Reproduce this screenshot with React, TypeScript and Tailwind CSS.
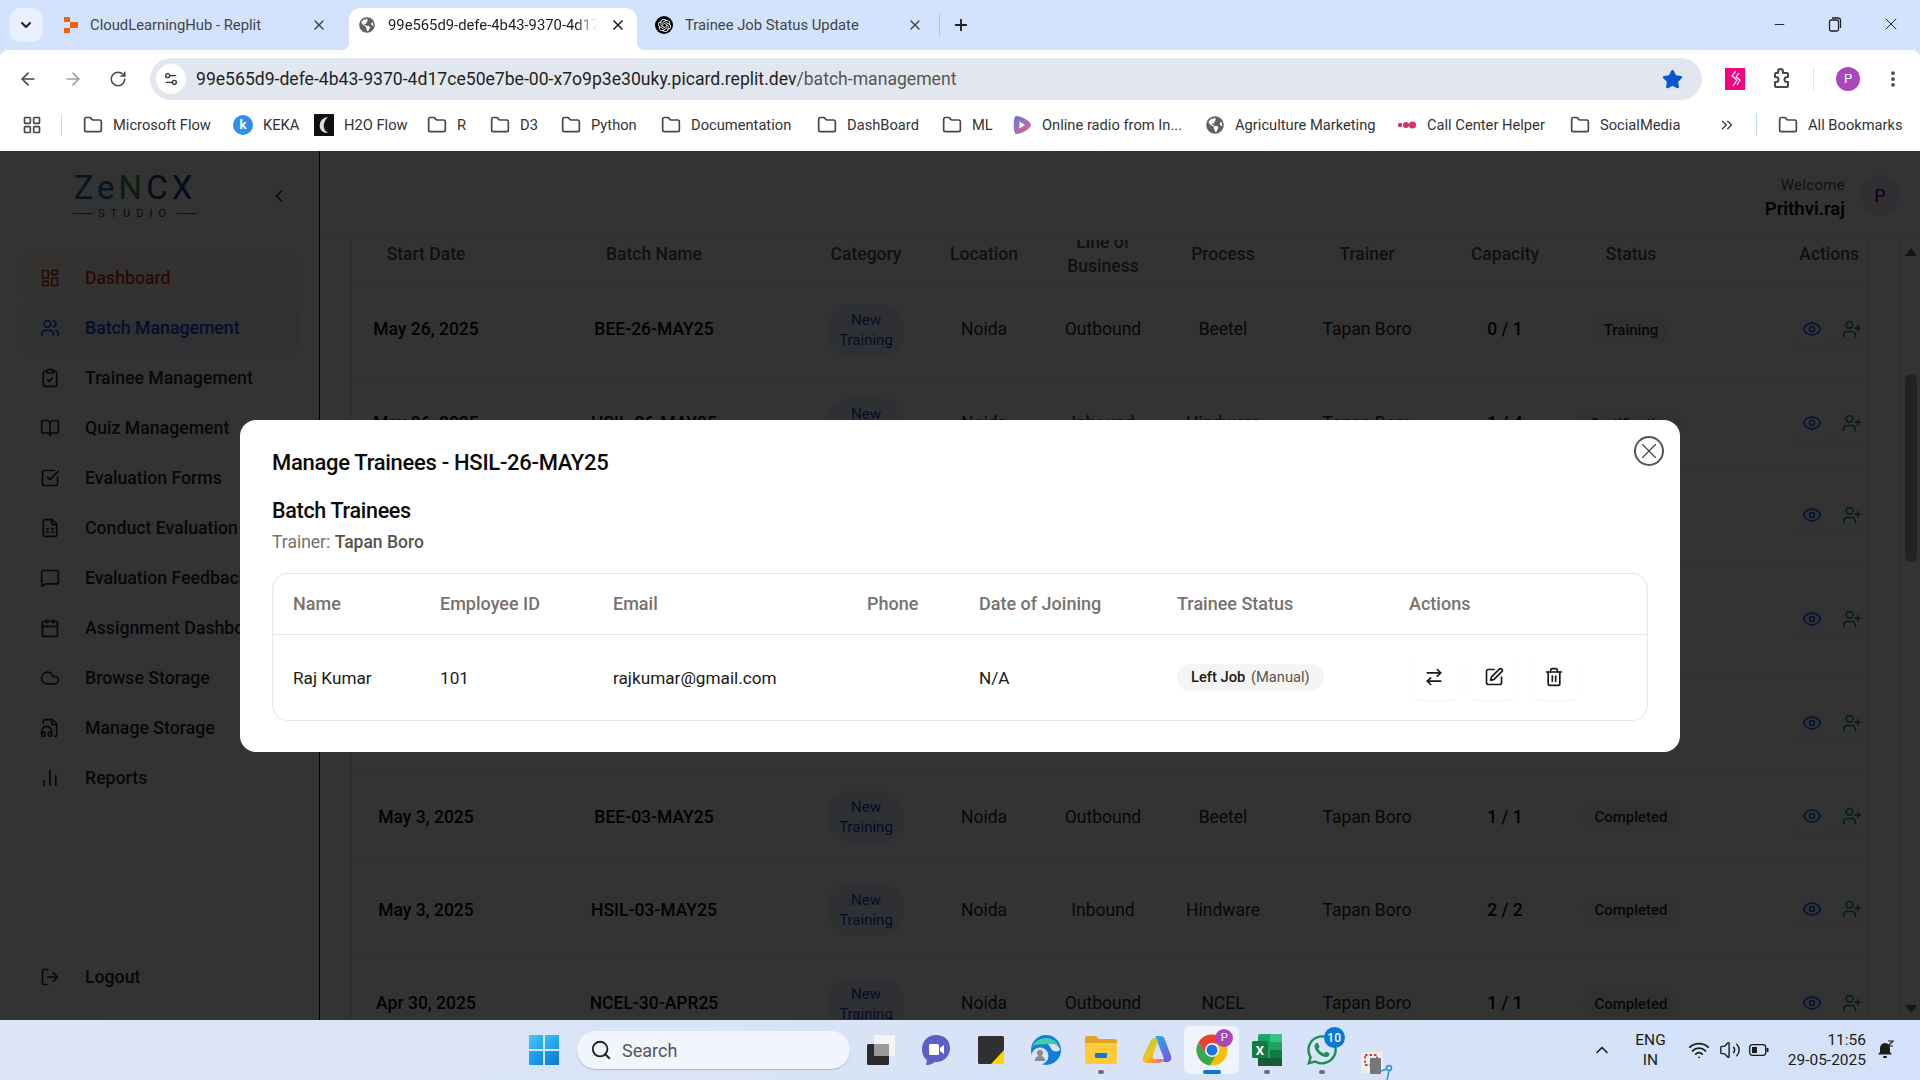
import {
  ArrowLeft,
  ArrowRight,
  ArrowRightLeft,
  BookOpen,
  Calendar,
  ChartNoAxesColumn,
  ChevronLeft,
  ChevronUp,
  ChevronsRight,
  ClipboardCheck,
  Cloud,
  EllipsisVertical,
  Eye,
  FileAudio2,
  FileSpreadsheet,
  Folder,
  LayoutDashboard,
  LayoutGrid,
  LogOut,
  MessageSquare,
  Minus,
  Plus,
  RotateCw,
  Search,
  Settings2,
  SquareCheckBig,
  SquarePen,
  Star,
  Trash2,
  UserPlus,
  Users,
  Volume2,
  Wifi,
  X,
} from 'lucide-react'
import { FaGlobeAmericas, FaWhatsapp } from 'react-icons/fa'
import { SiOpenai } from 'react-icons/si'

const navItems = [
  { label: 'Dashboard', icon: LayoutDashboard, box: 'bg-orange-50/60', text: 'text-orange-700' },
  { label: 'Batch Management', icon: Users, box: 'bg-blue-100/60', text: 'text-blue-700' },
  { label: 'Trainee Management', icon: ClipboardCheck, box: '', text: 'text-gray-800' },
  { label: 'Quiz Management', icon: BookOpen, box: '', text: 'text-gray-800' },
  { label: 'Evaluation Forms', icon: SquareCheckBig, box: '', text: 'text-gray-800' },
  { label: 'Conduct Evaluation', icon: FileSpreadsheet, box: '', text: 'text-gray-800' },
  { label: 'Evaluation Feedback', icon: MessageSquare, box: '', text: 'text-gray-800' },
  { label: 'Assignment Dashboard', icon: Calendar, box: '', text: 'text-gray-800' },
  { label: 'Browse Storage', icon: Cloud, box: '', text: 'text-gray-800' },
  { label: 'Manage Storage', icon: FileAudio2, box: '', text: 'text-gray-800' },
  { label: 'Reports', icon: ChartNoAxesColumn, box: '', text: 'text-gray-800' },
]

const rows = [
  { h: 'h-[95px]', date: 'May 26, 2025', batch: 'BEE-26-MAY25', lob: 'Outbound', process: 'Beetel', cap: '0 / 1', status: 'Training' },
  { h: 'h-[93px]', date: 'May 26, 2025', batch: 'HSIL-26-MAY25', lob: 'Inbound', process: 'Hindware', cap: '1 / 4', status: 'Certification' },
  { h: 'h-[92px]', date: 'May 20, 2025', batch: 'NCEL-20-MAY25', lob: 'Outbound', process: 'NCEL', cap: '1 / 1', status: 'Completed' },
  { h: 'h-[115px]', date: 'May 15, 2025', batch: 'BEE-15-MAY25', lob: 'Outbound', process: 'Beetel', cap: '1 / 1', status: 'Completed' },
  { h: 'h-[94px]', date: 'May 10, 2025', batch: 'HSIL-10-MAY25', lob: 'Inbound', process: 'Hindware', cap: '1 / 1', status: 'Completed' },
  { h: 'h-[92px]', date: 'May 3, 2025', batch: 'BEE-03-MAY25', lob: 'Outbound', process: 'Beetel', cap: '1 / 1', status: 'Completed' },
  { h: 'h-[94px]', date: 'May 3, 2025', batch: 'HSIL-03-MAY25', lob: 'Inbound', process: 'Hindware', cap: '2 / 2', status: 'Completed' },
  { h: 'h-[93px]', date: 'Apr 30, 2025', batch: 'NCEL-30-APR25', lob: 'Outbound', process: 'NCEL', cap: '1 / 1', status: 'Completed' },
]

const bookmarks = [
  { label: 'Microsoft Flow', w: 'w-[150px]', icon: 'folder' },
  { label: 'KEKA', w: 'w-[81px]', icon: 'keka' },
  { label: 'H2O Flow', w: 'w-[113px]', icon: 'h2o' },
  { label: 'R', w: 'w-[63px]', icon: 'folder' },
  { label: 'D3', w: 'w-[71px]', icon: 'folder' },
  { label: 'Python', w: 'w-[100px]', icon: 'folder' },
  { label: 'Documentation', w: 'w-[156px]', icon: 'folder' },
  { label: 'DashBoard', w: 'w-[125px]', icon: 'folder' },
  { label: 'ML', w: 'w-[70px]', icon: 'folder' },
  { label: 'Online radio from In...', w: 'w-[193px]', icon: 'radio' },
  { label: 'Agriculture Marketing', w: 'w-[192px]', icon: 'globe' },
  { label: 'Call Center Helper', w: 'w-[173px]', icon: 'dots' },
  { label: 'SocialMedia', w: 'w-[142px]', icon: 'folder' },
]

function BookmarkIcon({ kind }: { kind: string }) {
  if (kind === 'keka')
    return (
      <span className="flex h-5 w-5 items-center justify-center rounded-full bg-[#2f8fe6] text-[13px] font-bold text-white">k</span>
    )
  if (kind === 'h2o')
    return (
      <svg width="20" height="22" viewBox="0 0 20 22">
        <rect width="20" height="22" fill="#111" />
        <path d="M14 3C7 4 5 9 6 14c1 3 4 5 8 5-3-2-5-5-4-9 .5-3 2-5 4-7z" fill="#ddd" />
      </svg>
    )
  if (kind === 'radio')
    return (
      <svg width="20" height="20" viewBox="0 0 20 20">
        <defs>
          <linearGradient id="radio" x1="0" y1="0" x2="1" y2="1">
            <stop offset="0" stopColor="#5c7bd9" />
            <stop offset="1" stopColor="#ef5f8e" />
          </linearGradient>
        </defs>
        <path d="M4 1c5 0 15 5 15 9s-10 9-15 9c-3 0-3-18 0-18z" fill="url(#radio)" />
        <path d="M7.500 6.500l5.500 3.500-5.500 3.500z" fill="#fff" />
      </svg>
    )
  if (kind === 'globe') return <FaGlobeAmericas size={18} className="text-[#5f6368]" />
  if (kind === 'dots')
    return (
      <svg width="20" height="10" viewBox="0 0 20 10">
        <circle cx="3" cy="5" r="2.2" fill="#d6336c" />
        <circle cx="9" cy="5" r="3" fill="#d6336c" />
        <circle cx="15.5" cy="5" r="3.6" fill="#d6336c" />
      </svg>
    )
  return <Folder size={20} strokeWidth={2} className="text-[#474747]" />
}

function BrowserChrome() {
  return (
    <div className="h-[151px] shrink-0 bg-[#d3e3fd] text-[#1f1f1f]">
      <div className="flex h-[50px]">
        <div className="mt-2 ml-[9px] flex h-[34px] w-[34px] items-center justify-center rounded-xl bg-[#e8f0fe]">
          <ChevronUp size={16} strokeWidth={3} className="rotate-180" />
        </div>
        <div className="mt-2 ml-[17px] flex h-[42px] w-[285px] items-center pr-[18px] pb-2 pl-[3px] text-[14.8px] text-[#444]">
          <svg width="16" height="18" viewBox="0 0 16 18" className="shrink-0">
            <path d="M1 1h6v5H1zM7 6h8v6H7zM1 12h6v5H1z" fill="#f26207" />
          </svg>
          <span className="ml-[11px] flex-1 truncate">CloudLearningHub - Replit</span>
          <X size={16} strokeWidth={2} />
        </div>
        <div className="relative mt-2 ml-1 flex h-[42px] w-[288px] items-center rounded-t-xl bg-white pr-[11px] pb-2 pl-[10px] text-[14.8px] before:absolute before:bottom-0 before:-left-2 before:h-2 before:w-2 before:bg-[radial-gradient(circle_at_0_0,transparent_8px,white_8.5px)] after:absolute after:-right-2 after:bottom-0 after:h-2 after:w-2 after:bg-[radial-gradient(circle_at_100%_0,transparent_8px,white_8.5px)]">
          <FaGlobeAmericas size={16} className="shrink-0 text-[#5f6368]" />
          <span className="ml-[13px] min-w-0 flex-1 overflow-hidden whitespace-nowrap [mask-image:linear-gradient(90deg,#000_90%,transparent)]">
            99e565d9-defe-4b43-9370-4d17ce50e7be
          </span>
          <X size={16} strokeWidth={2.5} className="ml-[13px] shrink-0" />
        </div>
        <div className="mt-2 ml-3 flex h-[42px] w-[286px] items-center pr-3 pb-2 pl-[6px] text-[14.8px] text-[#444]">
          <span className="flex h-[18px] w-[18px] shrink-0 items-center justify-center rounded-full bg-black">
            <SiOpenai size={13} className="text-white" />
          </span>
          <span className="ml-3 flex-1 truncate">Trainee Job Status Update</span>
          <X size={16} strokeWidth={2} />
        </div>
        <div className="mt-[13px] ml-1 h-[24px] w-px bg-[#a8c7fa]" />
        <Plus size={18} strokeWidth={2.5} className="mt-4 ml-3" />
        <div className="ml-auto flex h-[48px] items-center pr-[19px]">
          <Minus size={15} strokeWidth={1.5} />
          <svg width="14" height="16" viewBox="0 0 14 16" fill="none" stroke="#222" strokeWidth="1.3" className="ml-[41px]">
            <rect x="1.5" y="4" width="9" height="11" rx="1.5" />
            <path d="M4 2h6a2.5 2.5 0 0 1 2.5 2.5V12" />
          </svg>
          <X size={20} strokeWidth={1.2} className="ml-[39px]" />
        </div>
      </div>

      <div className="rounded-t-lg bg-white">
        <div className="flex h-[58px] items-center pl-[5px]">
          <div className="flex w-[45px] justify-center">
            <ArrowLeft size={20} strokeWidth={2} className="text-[#474747]" />
          </div>
          <div className="flex w-[45px] justify-center">
            <ArrowRight size={20} strokeWidth={2} className="text-[#a0a0a0]" />
          </div>
          <div className="flex w-[45px] justify-center">
            <RotateCw size={18} strokeWidth={2} className="text-[#474747]" />
          </div>
          <div className="ml-[10px] flex h-[42px] w-[1552px] items-center rounded-full bg-[#e2e7ef] pr-[19px] pl-[6px]">
            <span className="flex h-[30px] w-[30px] items-center justify-center rounded-full bg-white">
              <Settings2 size={16} className="text-[#333]" />
            </span>
            <span className="mt-px ml-[10px] text-[17.6px] text-[#1f1f1f]">
              99e565d9-defe-4b43-9370-4d17ce50e7be-00-x7o9p3e30uky.picard.replit.dev
              <span className="text-[#555]">/batch-management</span>
            </span>
            <Star size={21} className="ml-auto fill-[#0b57d0] text-[#0b57d0]" />
          </div>
          <svg width="20" height="22" viewBox="0 0 20 22" className="ml-[23px]">
            <rect width="20" height="22" fill="#f0047f" />
            <path d="M11 3L7 8l5 4-4 6M14 5l-3 4 4 3-3 5" fill="none" stroke="#fff" strokeWidth="1.2" />
          </svg>
          <svg width="24" height="24" viewBox="0 0 24 24" fill="none" stroke="#474747" strokeWidth="2" strokeLinejoin="round" className="ml-[24px]">
            <path d="M9 4.500a2.500 2.500 0 0 1 5 0V6h4a1 1 0 0 1 1 1v3h-1a2.500 2.500 0 0 0 0 5h1v4a1 1 0 0 1-1 1H7a1 1 0 0 1-1-1v-4h1a2.500 2.500 0 0 0 0-5H6V7a1 1 0 0 1 1-1h2z" />
          </svg>
          <div className="ml-[20px] h-[22px] w-px bg-[#d3e3fd]" />
          <span className="ml-[22px] flex h-[24px] w-[24px] items-center justify-center rounded-full bg-[#ab47bc] text-[13px] text-white">P</span>
          <EllipsisVertical size={20} strokeWidth={2.5} className="ml-[23px] text-[#474747]" />
        </div>
        <div className="flex h-[43px] items-center pb-[9px] text-[14.7px] text-[#333]">
          <LayoutGrid size={20} strokeWidth={2} className="ml-[22px] text-[#474747]" />
          <div className="mr-[21px] ml-[19px] h-[22px] w-px bg-[#c4d7f5]" />
          {bookmarks.map((b) => (
            <div key={b.label} className={`flex items-center ${b.w}`}>
              <span className="flex w-[20px] shrink-0 justify-center">
                <BookmarkIcon kind={b.icon} />
              </span>
              <span className="ml-[10px] whitespace-nowrap">{b.label}</span>
            </div>
          ))}
          <ChevronsRight size={18} className="ml-[6px] text-[#474747]" />
          <div className="ml-[20px] h-[22px] w-px bg-[#c4d7f5]" />
          <Folder size={20} strokeWidth={2} className="ml-[21px] text-[#474747]" />
          <span className="ml-[10px] whitespace-nowrap">All Bookmarks</span>
        </div>
      </div>
    </div>
  )
}

function Sidebar() {
  return (
    <aside className="flex h-full w-[320px] shrink-0 flex-col border-r border-black bg-white pr-[18px] pl-[22px] text-[17.7px] font-medium">
      <div className="mb-[12px] flex h-[90px] items-center">
        <div className="ml-[51px] flex w-[124px] flex-col items-center">
          <div className="text-[33px] leading-[30px] tracking-[4px] font-normal whitespace-nowrap">
            <span className="text-[#0e7490]">Z</span>
            <span className="text-[#1d6fa5]">e</span>
            <span className="text-[#2f8f4e]">N</span>
            <span className="text-[#1e3a8a]">C</span>
            <span className="text-[#1e3a8a]">X</span>
          </div>
          <div className="mt-1 flex w-full items-center text-[11px] leading-[13px] font-normal text-[#333]">
            <span className="h-px flex-1 bg-[#555]" />
            <span className="mx-[5px] tracking-[6px]">STUDIO</span>
            <span className="h-px flex-1 bg-[#555]" />
          </div>
        </div>
        <ChevronLeft size={20} className="ml-[72px] text-gray-800" />
      </div>
      {navItems.map((item) => (
        <div key={item.label} className={`flex h-[50px] shrink-0 items-center gap-[25px] rounded-xl pl-[18px] whitespace-nowrap ${item.box} ${item.text}`}>
          <item.icon size={20} strokeWidth={2} className="shrink-0" />
          <span>{item.label}</span>
        </div>
      ))}
      <div className="mt-auto mb-[18px] flex h-[50px] shrink-0 items-center gap-[25px] pl-[18px] text-gray-800">
        <LogOut size={20} strokeWidth={2} className="shrink-0" />
        <span>Logout</span>
      </div>
    </aside>
  )
}

function BatchTable() {
  return (
    <table className="-mt-[14px] w-full table-fixed border-collapse text-center text-[17.5px]">
      <colgroup>
        <col className="w-[148px]" />
        <col className="w-[308px]" />
        <col className="w-[116px]" />
        <col className="w-[120px]" />
        <col className="w-[118px]" />
        <col className="w-[122px]" />
        <col className="w-[166px]" />
        <col className="w-[110px]" />
        <col className="w-[142px]" />
        <col className="w-[168px]" />
      </colgroup>
      <thead>
        <tr className="h-[56px] border-b border-gray-200 leading-[24px] font-medium text-stone-600">
          <th className="font-medium">Start Date</th>
          <th className="font-medium">Batch Name</th>
          <th className="font-medium">Category</th>
          <th className="font-medium">Location</th>
          <th className="font-medium">Line of Business</th>
          <th className="font-medium">Process</th>
          <th className="font-medium">Trainer</th>
          <th className="font-medium">Capacity</th>
          <th className="font-medium">Status</th>
          <th className="pr-[11px] text-right font-medium">Actions</th>
        </tr>
      </thead>
      <tbody className="text-gray-800">
        {rows.map((r) => (
          <tr key={r.batch} className={`border-b border-gray-200 ${r.h}`}>
            <td className="font-medium text-gray-950">{r.date}</td>
            <td className="font-medium text-gray-950">{r.batch}</td>
            <td>
              <span className="mx-auto block w-[76px] rounded-[22px] bg-blue-100/70 py-[6px] text-[15px] leading-[20px] text-blue-800">
                New Training
              </span>
            </td>
            <td>Noida</td>
            <td>{r.lob}</td>
            <td>{r.process}</td>
            <td>Tapan Boro</td>
            <td className="font-medium text-gray-950">{r.cap}</td>
            <td>
              <span className="inline-block rounded-full bg-stone-100 px-[11px] py-[3px] text-[15px] leading-[22px] font-medium text-gray-800">
                {r.status}
              </span>
            </td>
            <td>
              <div className="-mt-[2px] flex items-center justify-end">
                <span className="flex h-[36px] w-[36px] items-center justify-center rounded-lg shadow-xs">
                  <Eye size={20} className="text-blue-600" />
                </span>
                <span className="ml-[4px] flex h-[36px] w-[36px] items-center justify-center rounded-lg shadow-xs">
                  <UserPlus size={20} className="text-green-600" />
                </span>
              </div>
            </td>
          </tr>
        ))}
      </tbody>
    </table>
  )
}

function Main() {
  return (
    <main className="flex h-full min-w-0 flex-1 flex-col bg-white">
      <header className="flex h-[89px] shrink-0 items-center justify-end border-b border-gray-200 pr-5">
        <div className="pt-[3px] text-right">
          <div className="text-[15px] leading-[24px] tracking-[0.3px] text-gray-600">Welcome</div>
          <div className="text-[18.5px] leading-[24px] font-semibold text-gray-950">Prithvi.raj</div>
        </div>
        <span className="ml-[15px] flex h-[40px] w-[40px] items-center justify-center rounded-full bg-purple-100 text-[18px] font-medium text-purple-800">P</span>
      </header>
      <div className="flex min-h-0 flex-1 pl-[31px]">
        <div className="w-[1518px] shrink-0 overflow-hidden border-x border-gray-200">
          <BatchTable />
        </div>
        <div className="ml-[31px] flex w-5 flex-col items-center border-l border-gray-200">
          <svg width="12" height="8" viewBox="0 0 12 8" className="mt-2">
            <path d="M6 0l6 8H0z" fill="#666" />
          </svg>
          <div className="mt-[118px] h-[188px] w-3 rounded-full bg-[#a8a8a8]" />
          <svg width="12" height="8" viewBox="0 0 12 8" className="mt-auto mb-[7px]">
            <path d="M6 8L0 0h12z" fill="#666" />
          </svg>
        </div>
      </div>
    </main>
  )
}

function ManageTraineesModal() {
  return (
    <div className="absolute inset-0 flex items-center justify-center bg-black/80">
      <div className="relative h-[332px] w-[1440px] rounded-2xl bg-white px-8 pt-[27px] pb-[31px] text-stone-950">
        <h2 className="text-[22px] leading-[32px] tracking-[-0.3px] font-medium">Manage Trainees - HSIL-26-MAY25</h2>
        <h3 className="mt-[17px] text-[21.5px] leading-[30px] tracking-[-0.3px] font-medium">Batch Trainees</h3>
        <p className="mt-1 text-[17.5px] leading-[24px] text-stone-500">
          Trainer: <span className="font-medium text-stone-600">Tapan Boro</span>
        </p>
        <div className="mt-[19px] overflow-hidden rounded-2xl border border-gray-200">
          <table className="w-full table-fixed border-collapse text-left text-[18px]">
            <colgroup>
              <col className="w-[167px]" />
              <col className="w-[173px]" />
              <col className="w-[254px]" />
              <col className="w-[112px]" />
              <col className="w-[198px]" />
              <col className="w-[232px]" />
              <col />
            </colgroup>
            <thead>
              <tr className="h-[61px] border-b border-gray-200 font-medium text-stone-500">
                <th className="pl-5 font-medium">Name</th>
                <th className="font-medium">Employee ID</th>
                <th className="font-medium">Email</th>
                <th className="font-medium">Phone</th>
                <th className="font-medium">Date of Joining</th>
                <th className="font-medium">Trainee Status</th>
                <th className="font-medium">Actions</th>
              </tr>
            </thead>
            <tbody>
              <tr className="h-[85px] text-[17.2px] text-stone-900">
                <td className="pt-[3px] pl-5">Raj Kumar</td>
                <td className="pt-[3px]">101</td>
                <td className="pt-[3px]">rajkumar@gmail.com</td>
                <td></td>
                <td className="pt-[3px]">N/A</td>
                <td>
                  <span className="inline-block rounded-full bg-stone-100 px-[14px] py-[3px] text-[14.7px] leading-[21px] font-medium text-stone-900">
                    Left Job <span className="ml-[2px] font-normal text-stone-600">(Manual)</span>
                  </span>
                </td>
                <td>
                  <div className="flex gap-[10px]">
                    <span className="flex h-[45px] w-[50px] items-center justify-center rounded-xl shadow-xs">
                      <ArrowRightLeft size={20} strokeWidth={2} />
                    </span>
                    <span className="flex h-[45px] w-[50px] items-center justify-center rounded-xl shadow-xs">
                      <SquarePen size={20} strokeWidth={2} />
                    </span>
                    <span className="flex h-[45px] w-[50px] items-center justify-center rounded-xl shadow-xs">
                      <Trash2 size={20} strokeWidth={2} />
                    </span>
                  </div>
                </td>
              </tr>
            </tbody>
          </table>
        </div>
        <button type="button" className="absolute top-4 right-4 flex h-[30px] w-[30px] items-center justify-center rounded-full border-2 border-[#555] text-stone-700">
          <X size={26} strokeWidth={1} />
        </button>
      </div>
    </div>
  )
}

function TaskbarIcon({ kind }: { kind: string }) {
  switch (kind) {
    case 'taskview':
      return (
        <svg width="28" height="30" viewBox="0 0 28 30">
          <rect x="0" y="9" width="22" height="21" rx="1.5" fill="#2b2b2b" />
          <rect x="7" y="0" width="21" height="21" rx="1.5" fill="#f4f4f4" />
          <rect x="7" y="9" width="15" height="12" fill="#9a9a9a" />
        </svg>
      )
    case 'meet':
      return (
        <svg width="30" height="32" viewBox="0 0 30 32">
          <path d="M15 1C7 1 1 7 1 15c0 5 2 9 5 11l-1 5c5 0 7-2 9-3h1c8 0 14-6 14-14S23 1 15 1z" fill="#5b5fc7" />
          <rect x="8" y="10" width="10" height="11" rx="1.5" fill="#fff" />
          <path d="M19 14l4-3v9l-4-3z" fill="#fff" />
        </svg>
      )
    case 'sticky':
      return (
        <svg width="26" height="28" viewBox="0 0 26 28">
          <rect width="26" height="28" rx="1.5" fill="#303030" />
          <path d="M13 28L26 14v14z" fill="#ffd400" />
        </svg>
      )
    case 'edge':
      return (
        <svg width="30" height="32" viewBox="0 0 30 32">
          <circle cx="15" cy="16" r="15" fill="#0f7ed6" />
          <path d="M1 14C3 3 24 -2 29 15c-2-4-7-6-12-5C11 11 3 9 1 14z" fill="#3fd0a8" />
          <path d="M29 15c0 3-6 3-8 1-2-3-3-5-4-6 6-1 10 1 12 5z" fill="#d9e3f5" />
          <circle cx="9" cy="22" r="8.500" fill="#d9e3f5" />
          <circle cx="9" cy="19" r="3" fill="#8a8a8a" />
          <path d="M3.500 27c1-4 3-5 5.500-5s4.500 1 5.500 5z" fill="#8a8a8a" />
        </svg>
      )
    case 'explorer':
      return (
        <svg width="32" height="28" viewBox="0 0 32 28">
          <path d="M0 2a2 2 0 0 1 2-2h9l3 3h16a2 2 0 0 1 2 2v4H0z" fill="#e0a324" />
          <path d="M0 7h32v19a2 2 0 0 1-2 2H2a2 2 0 0 1-2-2z" fill="#ffcb3d" />
          <rect x="10" y="17" width="12" height="5" rx="1" fill="#0a7cd6" />
        </svg>
      )
    case 'copilot':
      return (
        <svg width="32" height="32" viewBox="0 0 32 32">
          <defs>
            <linearGradient id="cpA" x1="0" y1="0" x2="1" y2="1">
              <stop offset="0" stopColor="#1fb0e8" />
              <stop offset="1" stopColor="#7a4fe0" />
            </linearGradient>
            <linearGradient id="cpB" x1="0" y1="0" x2="1" y2="1">
              <stop offset="0" stopColor="#8fd14f" />
              <stop offset="0.5" stopColor="#f5c518" />
              <stop offset="1" stopColor="#f0567a" />
            </linearGradient>
          </defs>
          <path d="M14 2h5c3 0 4 1 5 4l6 16c1 3-1 6-4 6h-4c1-2 1-3 0-6L16 7c-.5-1.500-1-4-2-5z" fill="url(#cpA)" />
          <path d="M14 4c-2 0-4 1-5 4L2 23c-1 3 0 6 4 6h11c3 0 5-2 6-4h-9c-2 0-3-2-2-4l5-13c-.5-2-1-4-3-4z" fill="url(#cpB)" />
        </svg>
      )
    case 'chrome':
      return (
        <svg width="32" height="32" viewBox="0 0 32 32">
          <circle cx="16" cy="16" r="15.5" fill="#fbbc04" />
          <path d="M16 .5A15.500 15.500 0 0 0 2.600 8.200L9.500 20 16 9.500h13.400A15.500 15.500 0 0 0 16 .5z" fill="#ea4335" />
          <path d="M2.600 8.200A15.500 15.500 0 0 0 14 31.400L20.500 20 9.500 20z" fill="#34a853" />
          <circle cx="16" cy="16" r="7" fill="#fff" />
          <circle cx="16" cy="16" r="5.500" fill="#1a73e8" />
        </svg>
      )
    case 'excel':
      return (
        <svg width="30" height="32" viewBox="0 0 30 32">
          <rect x="6" y="0" width="24" height="32" rx="2" fill="#21a366" />
          <rect x="18" y="0" width="12" height="8" fill="#33c481" />
          <rect x="18" y="16" width="12" height="8" fill="#107c41" />
          <rect x="6" y="24" width="24" height="8" fill="#185c37" />
          <rect x="0" y="7" width="16" height="17" rx="1.500" fill="#107c41" />
          <text x="8" y="20.500" textAnchor="middle" fontSize="13" fontWeight="700" fill="#fff">X</text>
        </svg>
      )
    case 'snip':
      return (
        <svg width="32" height="36" viewBox="0 0 32 36" className="translate-y-5">
          <rect x="0" y="0" width="22" height="21" rx="2" fill="#eeeef2" />
          <rect x="4" y="3" width="12" height="10" fill="none" stroke="#c9402b" strokeWidth="1.800" strokeDasharray="2.500 2" />
          <rect x="9" y="6" width="11" height="16" rx="1" fill="#777" />
          <circle cx="28" cy="16" r="2.500" fill="none" stroke="#2a8fd8" strokeWidth="1.500" />
          <path d="M26 17l-6 2M26 28l2-9" stroke="#2a8fd8" strokeWidth="1.500" />
        </svg>
      )
    default:
      return null
  }
}

function Taskbar() {
  const slots = ['taskview', 'meet', 'sticky', 'edge', 'explorer', 'copilot', 'chrome', 'excel', 'whatsapp', 'snip']
  return (
    <div className="flex h-[60px] shrink-0 items-center bg-gradient-to-r from-[#dbe4f6] via-[#d9e3f7] to-[#d3e2fa] text-[#1c1c1c]">
      <div className="ml-[529px] grid h-[30px] w-[30px] grid-cols-2 gap-[2px]">
        <span className="bg-gradient-to-br from-[#48c8f6] to-[#1aa2ea]" />
        <span className="bg-gradient-to-br from-[#38bdf3] to-[#1698e6]" />
        <span className="bg-gradient-to-br from-[#27aaee] to-[#0d8ae0]" />
        <span className="bg-gradient-to-br from-[#1c9aea] to-[#0a78d6]" />
      </div>
      <div className="mr-[3px] ml-[18px] flex h-[38px] w-[273px] items-center rounded-full bg-[#f1f5fd] pl-[13px] text-[18px] text-[#555] shadow-[0_1px_1px_#a9b5cf]">
        <Search size={22} strokeWidth={2} className="text-[#222]" />
        <span className="ml-[10px]">Search</span>
      </div>
      {slots.map((s) => (
        <div key={s} className={`relative flex h-[48px] w-[55.2px] items-center justify-center ${s === 'chrome' ? 'rounded-md bg-[#eef3fc]' : ''}`}>
          {s === 'whatsapp' ? <FaWhatsapp size={34} className="text-[#1d8f4e]" /> : <TaskbarIcon kind={s} />}
          {s === 'chrome' && (
            <span className="absolute top-[3px] right-[6px] flex h-[18px] w-[18px] items-center justify-center rounded-full bg-[#ab47bc] text-[11px] text-white">P</span>
          )}
          {s === 'whatsapp' && (
            <span className="absolute top-[1px] right-[5px] flex h-[21px] w-[21px] items-center justify-center rounded-full bg-[#0a78d6] text-[12px] font-medium text-white">10</span>
          )}
          {['explorer', 'excel', 'whatsapp'].includes(s) && (
            <span className="absolute bottom-0 h-[4px] w-[6px] rounded-full bg-[#6a6f7a]" />
          )}
          {s === 'chrome' && <span className="absolute bottom-0 h-[4px] w-[18px] rounded-full bg-[#0a78d6]" />}
        </div>
      ))}
      <div className="ml-auto flex items-center pr-[25px] text-[15.5px]">
        <div className="flex w-[26px] justify-center">
          <ChevronUp size={20} strokeWidth={2} />
        </div>
        <div className="w-[71px] text-center leading-[20px]">
          ENG
          <br />
          IN
        </div>
        <Wifi size={22} strokeWidth={2} className="ml-[2px]" />
        <Volume2 size={22} strokeWidth={1.5} className="ml-[9px]" />
        <svg width="20" height="12" viewBox="0 0 20 12" fill="none" stroke="#1c1c1c" strokeWidth="1.300" className="ml-2">
          <rect x="0.700" y="0.700" width="16" height="10.600" rx="2.500" />
          <rect x="3" y="3" width="5" height="6" fill="#1c1c1c" stroke="none" />
          <path d="M18.500 4v4" strokeWidth="2" />
        </svg>
        <div className="ml-[13px] w-[84px] text-right leading-[20px] whitespace-nowrap">
          11:56
          <br />
          29-05-2025
        </div>
        <svg width="20" height="20" viewBox="0 0 20 20" className="ml-[9px]">
          <path d="M10 3c3.500 0 5 3 5 6v3l2 2.500H3L5 12V9c0-3 1.500-6 5-6z" fill="#1c1c1c" />
          <rect x="8" y="16" width="4" height="2" rx="1" fill="#1c1c1c" />
          <path d="M13 1h5l-5 5h5" fill="none" stroke="#1c1c1c" strokeWidth="1.200" />
        </svg>
      </div>
    </div>
  )
}

export default function App() {
  return (
    <div className="flex h-[1080px] w-[1920px] flex-col overflow-hidden font-[Roboto,sans-serif]">
      <BrowserChrome />
      <div className="relative flex min-h-0 flex-1 overflow-hidden">
        <Sidebar />
        <Main />
        <ManageTraineesModal />
      </div>
      <Taskbar />
    </div>
  )
}
